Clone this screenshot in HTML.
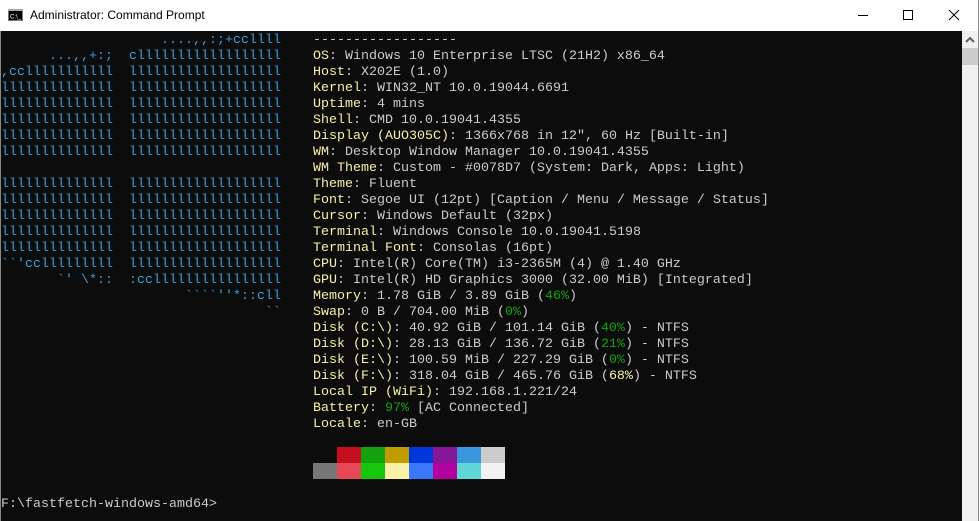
<!DOCTYPE html>
<html><head><meta charset="utf-8"><style>
html,body{margin:0;padding:0;width:979px;height:521px;overflow:hidden;background:#fff;}
#tb{position:absolute;left:0;top:0;width:979px;height:31px;background:#fff;}
#title{position:absolute;left:30px;top:8px;font:12px "Liberation Sans",sans-serif;color:#000;}
#con{position:absolute;left:1px;top:31px;width:961px;height:490px;background:#0c0c0c;}
#sb{position:absolute;left:962px;top:31px;width:16px;height:490px;background:#f0f0f0;}
#thumb{position:absolute;left:962px;top:48px;width:16px;height:17px;background:#cdcdcd;}
#rb{position:absolute;left:978px;top:0;width:1px;height:521px;background:#888;}
#lb{position:absolute;left:0;top:31px;width:1px;height:490px;background:#888;}
pre{margin:0;position:absolute;font:13.33px/16px "Liberation Mono",monospace;color:#cccccc;white-space:pre;}
.c{color:#3a9ddd}.y{color:#f9f1a5}.g{color:#13a10e}
.sw{position:absolute;width:24px;height:16px;}
</style></head><body>
<div id="tb"></div>
<svg style="position:absolute;left:8px;top:9px" width="15" height="12"><rect x="0.5" y="0.5" width="14" height="11" fill="#000" stroke="#777"/><rect x="0" y="0" width="15" height="2" fill="#aaa"/><text x="2" y="9.5" font-size="6" fill="#fff" font-family="Liberation Sans">C:\_</text></svg>
<div id="title">Administrator: Command Prompt</div>
<svg style="position:absolute;left:858px;top:10px" width="110" height="12"><line x1="0" y1="5.5" x2="10" y2="5.5" stroke="#000"/><rect x="45.5" y="0.5" width="9" height="9" fill="none" stroke="#000"/><path d="M91 0L101 10M101 0L91 10" stroke="#000"/></svg>
<div id="con"></div>
<div id="lb"></div>
<div id="sb"></div>
<div id="thumb"></div>
<svg style="position:absolute;left:964px;top:36px" width="12" height="8"><path d="M2 6L6 2L10 6" fill="none" stroke="#606060" stroke-width="2"/></svg>
<div id="rb"></div>
<pre class="c" style="left:1px;top:33px">                    ....,,:;+ccllll
      ...,,+:;  cllllllllllllllllll
,cclllllllllll  lllllllllllllllllll
llllllllllllll  lllllllllllllllllll
llllllllllllll  lllllllllllllllllll
llllllllllllll  lllllllllllllllllll
llllllllllllll  lllllllllllllllllll
llllllllllllll  lllllllllllllllllll

llllllllllllll  lllllllllllllllllll
llllllllllllll  lllllllllllllllllll
llllllllllllll  lllllllllllllllllll
llllllllllllll  lllllllllllllllllll
llllllllllllll  lllllllllllllllllll
&#96;&#96;'cclllllllll  lllllllllllllllllll
       &#96;' \*::  :ccllllllllllllllll
                       &#96;&#96;&#96;&#96;''*::cll
                                 &#96;&#96;</pre>
<pre style="left:313px;top:33px">------------------
<span class="y">OS</span>: Windows 10 Enterprise LTSC (21H2) x86_64
<span class="y">Host</span>: X202E (1.0)
<span class="y">Kernel</span>: WIN32_NT 10.0.19044.6691
<span class="y">Uptime</span>: 4 mins
<span class="y">Shell</span>: CMD 10.0.19041.4355
<span class="y">Display (AUO305C)</span>: 1366x768 in 12", 60 Hz [Built-in]
<span class="y">WM</span>: Desktop Window Manager 10.0.19041.4355
<span class="y">WM Theme</span>: Custom - #0078D7 (System: Dark, Apps: Light)
<span class="y">Theme</span>: Fluent
<span class="y">Font</span>: Segoe UI (12pt) [Caption / Menu / Message / Status]
<span class="y">Cursor</span>: Windows Default (32px)
<span class="y">Terminal</span>: Windows Console 10.0.19041.5198
<span class="y">Terminal Font</span>: Consolas (16pt)
<span class="y">CPU</span>: Intel(R) Core(TM) i3-2365M (4) @ 1.40 GHz
<span class="y">GPU</span>: Intel(R) HD Graphics 3000 (32.00 MiB) [Integrated]
<span class="y">Memory</span>: 1.78 GiB / 3.89 GiB (<span class="g">46%</span>)
<span class="y">Swap</span>: 0 B / 704.00 MiB (<span class="g">0%</span>)
<span class="y">Disk (C:\)</span>: 40.92 GiB / 101.14 GiB (<span class="g">40%</span>) - NTFS
<span class="y">Disk (D:\)</span>: 28.13 GiB / 136.72 GiB (<span class="g">21%</span>) - NTFS
<span class="y">Disk (E:\)</span>: 100.59 MiB / 227.29 GiB (<span class="g">0%</span>) - NTFS
<span class="y">Disk (F:\)</span>: 318.04 GiB / 465.76 GiB (<span class="y">68%</span>) - NTFS
<span class="y">Local IP (WiFi)</span>: 192.168.1.221/24
<span class="y">Battery</span>: <span class="g">97%</span> [AC Connected]
<span class="y">Locale</span>: en-GB</pre>
<div class="sw" style="left:337px;top:447px;background:#c50f1f"></div>
<div class="sw" style="left:361px;top:447px;background:#13a10e"></div>
<div class="sw" style="left:385px;top:447px;background:#c19c00"></div>
<div class="sw" style="left:409px;top:447px;background:#0037da"></div>
<div class="sw" style="left:433px;top:447px;background:#881798"></div>
<div class="sw" style="left:457px;top:447px;background:#3a96dd"></div>
<div class="sw" style="left:481px;top:447px;background:#cccccc"></div>
<div class="sw" style="left:313px;top:463px;background:#767676"></div>
<div class="sw" style="left:337px;top:463px;background:#e74856"></div>
<div class="sw" style="left:361px;top:463px;background:#16c60c"></div>
<div class="sw" style="left:385px;top:463px;background:#f9f1a5"></div>
<div class="sw" style="left:409px;top:463px;background:#3b78ff"></div>
<div class="sw" style="left:433px;top:463px;background:#b4009e"></div>
<div class="sw" style="left:457px;top:463px;background:#61d6d6"></div>
<div class="sw" style="left:481px;top:463px;background:#f2f2f2"></div>
<pre style="left:1px;top:497px">F:\fastfetch-windows-amd64&gt;</pre>
</body></html>
